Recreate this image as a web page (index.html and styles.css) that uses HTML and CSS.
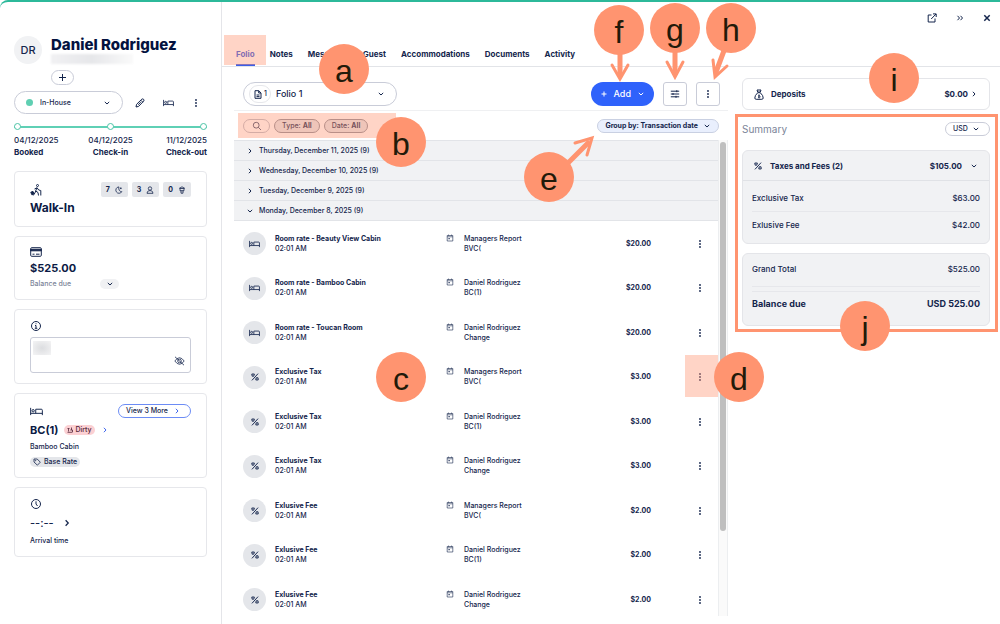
FILE: index.html
```html
<!DOCTYPE html>
<html lang="en">
<head>
  <meta charset="utf-8">
  <title>Daniel Rodriguez - Folio</title>
  <link rel="stylesheet" href="styles.css">
</head>
<body>
  <svg class="sprite" aria-hidden="true">
    <symbol id="down" viewBox="0 0 8 8"><path d="M1.800 2.900 4 5 6.200 2.900"/></symbol>
    <symbol id="right" viewBox="0 0 8 8"><path d="M2.900 1.800 5 4 2.900 6.200"/></symbol>
    <symbol id="dots" viewBox="0 0 4 12"><g fill="currentColor" stroke="none"><circle cx="2" cy="3" r=".9"/><circle cx="2" cy="6" r=".9"/><circle cx="2" cy="9" r=".9"/></g></symbol>
    <symbol id="bed" viewBox="0 0 12 8"><path stroke-width=".9" d="M.6.6v6.800M.6 5.700h10.800M11.400 7.400V2.900q0-1-1-1H5.300v3.800"/><circle stroke-width=".9" cx="2.900" cy="3.300" r="1.100"/></symbol>
    <symbol id="percent" viewBox="0 0 10 10"><path stroke-width="1.200" d="M8.800.8 1.200 9.200M1 1.300h3.200L3.400 4H1.500zM6.500 6h2.300L9 8.700H6z"/></symbol>
    <symbol id="calendar" viewBox="0 0 8 8"><path stroke-width=".6" d="M1.200 1.500h5.600v5.500H1.200zM1.200 2.800h5.600M2.500.6v1M5.500.6v1"/><path d="M2.500 4h1.200v1.200H2.500z" fill="currentColor" stroke="none"/></symbol>
  </svg>

  <div class="page">
    <aside class="sidebar">
      <header class="guest">
        <div class="avatar">DR</div>
        <div class="guest-info">
          <h1>Daniel Rodriguez</h1>
          <div class="redacted"></div>
          <button class="add-tag" aria-label="Add tag"><svg width="9" height="9" viewBox="0 0 9 9"><path d="M4.500 1v7M1 4.500h7"/></svg></button>
        </div>
      </header>

      <div class="status-row">
        <label class="status">
          <span class="status-dot"></span>
          <select aria-label="Status"><option>In-House</option></select>
          <svg width="8" height="8"><use href="#down"/></svg>
        </label>
        <button class="icon-btn" aria-label="Edit"><svg width="10" height="10" viewBox="0 0 10 10"><path d="M1 9l.6-2.700L6.800 1.200q1-.7 1.800.1t.1 1.800L3.600 8.400zM5.800 2.200l2 2M3.200 6.700l2.600-2.600"/></svg></button>
        <button class="icon-btn" aria-label="Room"><svg width="11" height="8"><use href="#bed"/></svg></button>
        <button class="icon-btn" aria-label="More"><svg width="4" height="12"><use href="#dots"/></svg></button>
      </div>

      <div class="timeline">
        <div class="track"><i></i><i></i><i></i></div>
        <ol class="dates">
          <li>04/12/2025<b>Booked</b></li>
          <li>04/12/2025<b>Check-in</b></li>
          <li>11/12/2025<b>Check-out</b></li>
        </ol>
      </div>

      <section class="card walkin">
        <div class="card-top">
          <svg width="12" height="12" viewBox="0 0 12 12"><circle cx="7.500" cy="1.500" r="1"/><path d="M7 3.500 5.700 7l2.300 1.500.5 3M5.700 7l-.8 2-1.700 2.500M6.800 3.800 4.500 5M7.200 4l1.500 2 2 .5M10.800 6.500v5"/><path d="M.8 8.200 3 7.400l1 2.400-2.200.9z" fill="currentColor"/></svg>
          <div class="chips">
            <span class="chip">7 <svg width="8" height="8" viewBox="0 0 8 8"><path d="M3.800.9a3.200 3.200 0 1 0 3 4.800Q3.300 5.500 3.800.9zM5.800 1.500v1.600M5 2.300h1.600"/></svg></span>
            <span class="chip">3 <svg width="8" height="8" viewBox="0 0 8 8"><circle cx="4" cy="2.500" r="1.700"/><path d="M1 7.300Q1.200 5 3 4.700h2Q6.800 5 7 7.300z"/></svg></span>
            <span class="chip">0 <svg width="8" height="8" viewBox="0 0 8 8"><path d="M2 2.500h4v2.200H2zM1 2.500 4 .8l3 1.700M3 4.700v2.500h2V4.700"/></svg></span>
          </div>
        </div>
        <h2>Walk-In</h2>
      </section>

      <section class="card balance">
        <svg width="12" height="10" viewBox="0 0 12 10"><rect x=".7" y=".7" width="10.600" height="8.600" rx="1"/><path d="M.7 2.300h10.600v1.500H.7z" fill="currentColor"/><path d="M2.500 7.200h2M6 7.200h3.500"/></svg>
        <h2>$525.00</h2>
        <div class="balance-due"><span>Balance due</span><button class="toggle" aria-label="Show details"><svg width="8" height="8"><use href="#down"/></svg></button></div>
      </section>

      <section class="card info">
        <svg width="12" height="12" viewBox="0 0 12 12"><circle cx="6" cy="6" r="4.500"/><path d="M5 5.500h1v2.700M4.800 8.300h2.500M6 3.300v.9"/></svg>
        <div class="note">
          <textarea aria-label="Guest note"></textarea>
          <span class="note-blur"></span>
          <svg class="eye" width="11" height="10" viewBox="0 0 11 10"><path d="M.8 5Q5.500-1.500 10.200 5 5.500 11.500.8 5z"/><circle cx="5.500" cy="5" r="1.800"/><path d="M1 .8l9 8.400"/></svg>
        </div>
      </section>

      <section class="card room">
        <div class="card-top">
          <svg width="13" height="9" viewBox="0 0 12 8"><use href="#bed"/></svg>
          <button class="view-more">View 3 More <svg width="8" height="8"><use href="#right"/></svg></button>
        </div>
        <div class="room-name">
          <h2>BC(1)</h2>
          <span class="dirty"><svg width="6" height="6" viewBox="0 0 6 6"><path d="M.5 1.500h2M1.500 1.500v3M.5 5.300h5M4.500.5v2.500M3.300 3h2.200v2"/></svg> Dirty</span>
          <a href="#room" aria-label="Open room"><svg width="8" height="8"><use href="#right"/></svg></a>
        </div>
        <p>Bamboo Cabin</p>
        <span class="rate"><svg width="8" height="8" viewBox="0 0 8 8"><path d="M1 1h3.200L7.300 4.200 4.400 7.200 1 4z"/><circle cx="2.600" cy="2.600" r=".3"/></svg> Base Rate</span>
      </section>

      <section class="card arrival">
        <svg width="12" height="12" viewBox="0 0 12 12"><circle cx="6" cy="6" r="4.500"/><path d="M6 3.300V6l1.500 2"/></svg>
        <div class="time">--:-- <svg width="10" height="10" viewBox="0 0 8 8"><use href="#right"/></svg></div>
        <p>Arrival time</p>
      </section>
    </aside>

    <main class="main">
      <header class="topbar">
        <div class="window-actions">
          <button class="icon-btn" aria-label="Open in new tab"><svg width="10" height="10" viewBox="0 0 10 10"><path d="M4.500 2H1.200v7H8V5.500M6 .9h3.200V4M9 1 4.200 6"/></svg></button>
          <button class="icon-btn" aria-label="Collapse"><svg width="8" height="8" viewBox="0 0 8 8"><path d="M1.500 1.800 3.500 4 1.500 6.200M4.500 1.800 6.500 4 4.500 6.200"/></svg></button>
          <button class="icon-btn close" aria-label="Close"><svg width="8" height="8" viewBox="0 0 8 8"><path d="M1.300 1.300l5.400 5.400M6.700 1.300 1.300 6.700"/></svg></button>
        </div>
        <nav class="tabs">
          <a href="#folio" class="active">Folio</a>
          <a href="#notes">Notes</a>
          <a href="#messages">Messages</a>
          <a href="#guest">Guest</a>
          <a href="#accommodations">Accommodations</a>
          <a href="#documents">Documents</a>
          <a href="#activity">Activity</a>
        </nav>
      </header>

      <div class="content">
        <section class="folio">
          <div class="folio-bar">
            <label class="folio-select">
              <span class="count"><svg width="8" height="9" viewBox="0 0 8 9"><path d="M1 .7h3.800L7 3v5.300H1zM4.700.8V3H7M2.500 5h3M2.500 6.600h3"/></svg>1</span>
              <select aria-label="Folio"><option>Folio 1</option></select>
              <svg width="8" height="8"><use href="#down"/></svg>
            </label>
            <button class="add"><svg width="8" height="8" viewBox="0 0 8 8"><path d="M4 1.500v5M1.500 4h5"/></svg>Add<svg width="8" height="8"><use href="#down"/></svg></button>
            <button class="square" aria-label="Settings"><svg width="10" height="10" viewBox="0 0 10 10"><path d="M.8 2.200h8.400M.8 5h8.400M.8 7.800h8.400M6.800 1.200v2M3 4v2M6 6.800v2"/></svg></button>
            <button class="square" aria-label="More options"><svg width="4" height="12"><use href="#dots"/></svg></button>
          </div>

          <div class="filters">
            <button class="pill search" aria-label="Search"><svg width="10" height="10" viewBox="0 0 10 10"><circle cx="4.200" cy="4.200" r="2.900"/><path d="M6.300 6.300 9 9"/></svg></button>
            <button class="pill filter">Type: <b>All</b></button>
            <button class="pill filter">Date: <b>All</b></button>
            <button class="pill group-by">Group by: Transaction date <svg width="8" height="8"><use href="#down"/></svg></button>
          </div>

          <div class="list">
            <div class="list-view">
              <table>
                <colgroup><col class="col-kind"><col class="col-title"><col><col class="col-amount"><col class="col-more"></colgroup>
                <tbody class="groups">
                  <tr><th colspan="5"><svg width="8" height="8"><use href="#right"/></svg>Thursday, December 11, 2025 (9)</th></tr>
                  <tr><th colspan="5"><svg width="8" height="8"><use href="#right"/></svg>Wednesday, December 10, 2025 (9)</th></tr>
                  <tr><th colspan="5"><svg width="8" height="8"><use href="#right"/></svg>Tuesday, December 9, 2025 (9)</th></tr>
                  <tr><th colspan="5"><svg width="8" height="8"><use href="#down"/></svg>Monday, December 8, 2025 (9)</th></tr>
                </tbody>
                <tbody class="entries" id="entries"></tbody>
              </table>
            </div>
            <div class="scrollbar"><div class="thumb"></div></div>
          </div>
        </section>

        <section class="summary">
          <a class="box deposits" href="#deposits">
            <svg width="10" height="11" viewBox="0 0 10 11"><path d="M3 1h4L6.300 3H3.700zM3.500 3.700h3M3.500 4Q.7 6.500.8 9q.1 1.300 1.400 1.300h5.600Q9.100 10.300 9.200 9q.1-2.500-2.700-5"/><path stroke-width=".7" d="M5 5.300v4M6 6.500Q4 6 4.200 7t1.600.7-.3 1L4 8.500"/></svg>
            <span>Deposits</span><b>$0.00</b><svg width="8" height="8"><use href="#right"/></svg>
          </a>
          <div class="summary-head">
            <h3>Summary</h3>
            <label class="currency"><select aria-label="Currency"><option>USD</option></select><svg width="8" height="8"><use href="#down"/></svg></label>
          </div>
          <div class="box taxes">
            <button class="taxes-head"><svg width="8" height="8"><use href="#percent"/></svg><span>Taxes and Fees (2)</span><b>$105.00</b><svg width="8" height="8"><use href="#down"/></svg></button>
            <dl>
              <div><dt>Exclusive Tax</dt><dd>$63.00</dd></div>
              <div><dt>Exlusive Fee</dt><dd>$42.00</dd></div>
            </dl>
          </div>
          <div class="box totals">
            <dl>
              <div class="grand"><dt>Grand Total</dt><dd>$525.00</dd></div>
              <div class="due"><dt>Balance due</dt><dd>USD 525.00</dd></div>
            </dl>
          </div>
        </section>
      </div>
    </main>
  </div>

  <!-- callouts -->
  <div class="mark mark-tab"></div>
  <div class="mark mark-filters"></div>
  <div class="mark mark-action"></div>
  <div class="frame"></div>
  <svg class="arrows" width="1000" height="624" viewBox="0 0 1000 624">
    <path class="shaft" d="M620 50v24M675 50v22M725 48l-9 24M567 164l21-21"/>
    <path class="head" d="M612 65l8 14 8-14M667 62l8 15 8-15M713 60l2 17 12-11M575 143l17-5-5 17"/>
  </svg>
  <div class="callout a">a</div>
  <div class="callout b">b</div>
  <div class="callout c">c</div>
  <div class="callout d">d</div>
  <div class="callout e">e</div>
  <div class="callout f">f</div>
  <div class="callout g">g</div>
  <div class="callout h">h</div>
  <div class="callout i">i</div>
  <div class="callout j">j</div>

  <script src="script.js"></script>
</body>
</html>
```

FILE: script.js
```js
const entries = [
  ["bed", "Room rate - Beauty View Cabin", "Managers Report", "BVC(", "$20.00"],
  ["bed", "Room rate - Bamboo Cabin", "Daniel Rodriguez", "BC(1)", "$20.00"],
  ["bed", "Room rate - Toucan Room", "Daniel Rodriguez", "Change", "$20.00"],
  ["percent", "Exclusive Tax", "Managers Report", "BVC(", "$3.00"],
  ["percent", "Exclusive Tax", "Daniel Rodriguez", "BC(1)", "$3.00"],
  ["percent", "Exclusive Tax", "Daniel Rodriguez", "Change", "$3.00"],
  ["percent", "Exlusive Fee", "Managers Report", "BVC(", "$2.00"],
  ["percent", "Exlusive Fee", "Daniel Rodriguez", "BC(1)", "$2.00"],
  ["percent", "Exlusive Fee", "Daniel Rodriguez", "Change", "$2.00"]
];

document.getElementById("entries").innerHTML = entries.map(([icon, title, guest, room, amount]) => `
  <tr>
    <td><span class="badge"><svg width="${icon === "bed" ? 11 : 8}" height="8"><use href="#${icon}"/></svg></span></td>
    <td><b>${title}</b><br>02:01 AM</td>
    <td class="who"><div><svg width="8" height="8"><use href="#calendar"/></svg><span>${guest}<br>${room}</span></div></td>
    <td class="amount">${amount}</td>
    <td class="more"><button class="icon-btn" aria-label="Actions"><svg width="4" height="12"><use href="#dots"/></svg></button></td>
  </tr>`).join("");
```

FILE: styles.css
```css
* {
  box-sizing: border-box;
}

body {
  margin: 0;
  background: #fff;
  color: #14254c;
  font: 500 7px/10px "Inter", sans-serif;
}

h1, h2, h3, p, ol, dl, dd {
  margin: 0;
  padding: 0;
}

b {
  font-weight: 700;
}

button, select, textarea {
  margin: 0;
  padding: 0;
  border: 0;
  background: none;
  color: inherit;
  font: inherit;
}

select {
  appearance: none;
  flex: 1;
  min-width: 0;
}

a {
  color: inherit;
  text-decoration: none;
}

svg {
  flex: none;
  fill: none;
  stroke: currentColor;
}

.sprite {
  position: absolute;
  width: 0;
  height: 0;
}

.page {
  display: grid;
  grid-template-columns: 222px 1fr;
  height: 100vh;
  border-top: 2px solid #2cb99a;
  border-top-left-radius: 8px;
}

.icon-btn {
  display: flex;
  align-items: center;
  justify-content: center;
}

/* sidebar */

.sidebar {
  display: flex;
  flex-direction: column;
  gap: 9px;
  padding: 34px 14px 0 14px;
  border-right: 1px solid #e4e5e9;
}

.guest {
  display: flex;
  gap: 9px;
  margin-bottom: -3px;
}

.avatar {
  width: 28px;
  height: 28px;
  border-radius: 50%;
  background: #f1f2f4;
  font-size: 11px;
  line-height: 28px;
  text-align: center;
}

h1 {
  color: #04123f;
  font-size: 15px;
  font-weight: 800;
  line-height: 18px;
}

.redacted {
  width: 82px;
  height: 10px;
  background: linear-gradient(90deg, #f1f1f3, #e6e7ea 50%, #fafafa);
  filter: blur(1px);
}

.add-tag {
  display: flex;
  align-items: center;
  justify-content: center;
  width: 23px;
  height: 15px;
  margin-top: 6px;
  border: 1px solid #c9ccd8;
  border-radius: 8px;
}

.status-row {
  display: flex;
  align-items: center;
  gap: 6px;
}

.status-row .icon-btn {
  width: 22px;
}

.status {
  display: flex;
  align-items: center;
  flex: 1;
  gap: 7px;
  height: 23px;
  padding: 0 11px;
  border: 1px solid #c9ccd8;
  border-radius: 12px;
}

.status-dot {
  width: 7px;
  height: 7px;
  border-radius: 50%;
  background: #5fcfb2;
}

.timeline {
  margin-bottom: 4px;
}

.track {
  display: flex;
  justify-content: space-between;
  background: linear-gradient(#5fd0b5, #5fd0b5) center / 100% 2px no-repeat;
}

.track i {
  width: 7px;
  height: 7px;
  border: 1px solid #4cc4a6;
  border-radius: 50%;
  background: #fff;
}

.dates {
  display: grid;
  grid-template-columns: 1fr 1fr 1fr;
  margin-top: 4px;
  list-style: none;
  font-size: 8px;
  line-height: 12px;
  text-align: center;
}

.dates li:first-child {
  text-align: left;
}

.dates li:last-child {
  text-align: right;
}

.dates b {
  display: block;
}

.card {
  display: flex;
  flex-direction: column;
  align-items: flex-start;
  padding: 10px 15px;
  border: 1px solid #e6e7eb;
  border-radius: 4px;
}

.card h2 {
  color: #0b1a44;
  font-size: 11px;
  line-height: 14px;
}

.card-top {
  display: flex;
  align-items: center;
  justify-content: space-between;
  width: 100%;
}

.chips {
  display: flex;
  gap: 4px;
}

.chip {
  display: flex;
  align-items: center;
  gap: 5px;
  height: 15px;
  padding: 0 5px;
  border-radius: 2px;
  background: #e4e6ea;
  font-weight: 700;
}

.chip svg {
  stroke-width: .8px;
}

.walkin {
  height: 56px;
}

.walkin h2 {
  margin-top: 4px;
  font-size: 12px;
}

.balance {
  height: 64px;
  gap: 4px;
}

.balance-due {
  display: flex;
  align-items: center;
  gap: 29px;
  color: #7b8498;
}

.toggle {
  display: flex;
  align-items: center;
  justify-content: center;
  width: 19px;
  height: 10px;
  border-radius: 5px;
  background: #f0f1f3;
  color: #14254c;
}

.info {
  gap: 5px;
}

.note {
  position: relative;
  width: 100%;
}

.note textarea {
  display: block;
  width: 100%;
  height: 36px;
  border: 1px solid #c9ccd8;
  border-radius: 3px;
  resize: none;
}

.note-blur {
  position: absolute;
  left: 3px;
  top: 4px;
  width: 18px;
  height: 14px;
  background: radial-gradient(#dcdde0, #f4f4f5);
}

.eye {
  position: absolute;
  right: 6px;
  bottom: 7px;
  stroke-width: .8px;
}

.room {
  height: 85px;
}

.view-more {
  display: flex;
  align-items: center;
  justify-content: space-between;
  width: 73px;
  height: 14px;
  padding: 0 9px 0 7px;
  border: 1px solid #6c8cf5;
  border-radius: 7px;
}

.view-more svg,
.room-name a {
  color: #3f66ee;
}

.room-name {
  display: flex;
  align-items: center;
  gap: 6px;
  margin: 5px 0;
}

.room-name a {
  display: flex;
}

.dirty,
.rate {
  display: flex;
  align-items: center;
  gap: 2px;
  height: 10px;
  padding: 0 3px;
  border-radius: 5px;
  background: #fbd0d3;
  color: #54263a;
}

.dirty svg,
.rate svg {
  stroke-width: .8px;
}

.rate {
  gap: 3px;
  margin-top: 5px;
  background: #e4e6ea;
  color: #14254c;
}

.arrival {
  height: 70px;
  gap: 8px;
}

.time {
  display: flex;
  align-items: center;
  gap: 8px;
  font-size: 11px;
}

/* top bar */

.main {
  display: flex;
  flex-direction: column;
  min-width: 0;
  min-height: 0;
}

.topbar {
  display: flex;
  flex-direction: column;
  justify-content: space-between;
  height: 65px;
  padding-top: 11px;
  border-bottom: 1px solid #e2e4e8;
}

.window-actions {
  display: flex;
  justify-content: flex-end;
  gap: 19px;
  padding-right: 9px;
}

.close {
  stroke-width: 1.5px;
}

.tabs {
  display: flex;
  gap: 15px;
  padding-left: 14px;
  font-size: 8px;
  font-weight: 700;
  line-height: 24px;
}

.tabs .active {
  box-shadow: inset 0 -2px #3a5fe8;
  color: #2f55e0;
}

/* folio */

.content {
  display: grid;
  grid-template-columns: 1fr 272px;
  flex: 1;
  min-height: 0;
}

.folio {
  display: flex;
  flex-direction: column;
  min-height: 0;
  padding: 15px 0 8px 12px;
}

.folio-bar {
  display: flex;
  gap: 9px;
  padding: 0 8px 4px 9px;
  border-bottom: 1px solid #eff0f2;
}

.folio-select {
  display: flex;
  align-items: center;
  gap: 5px;
  width: 154px;
  height: 24px;
  margin-right: auto;
  padding: 0 11px 0 5px;
  border: 1px solid #c9ccd8;
  border-radius: 12px;
  font-size: 9px;
}

.count {
  display: flex;
  align-items: center;
  gap: 2px;
  height: 18px;
  padding: 0 3px 0 4px;
  border: 1px solid #e6e7eb;
  border-radius: 9px;
  color: #14254c;
  font-size: 7px;
}

.add {
  display: flex;
  align-items: center;
  gap: 6px;
  height: 24px;
  padding: 0 9px;
  border-radius: 12px;
  background: #2f62fb;
  color: #fff;
  font-size: 9px;
}

.square {
  display: flex;
  align-items: center;
  justify-content: center;
  width: 24px;
  height: 24px;
  border: 1px solid #c9ccd8;
  border-radius: 3px;
}

.filters {
  display: flex;
  align-items: center;
  gap: 4px;
  height: 29px;
  padding: 0 9px;
}

.pill {
  display: flex;
  align-items: center;
  justify-content: center;
  gap: 2px;
  height: 14px;
  padding: 0 7px;
  border: 1px solid #b8bcc8;
  border-radius: 7px;
}

.search {
  width: 27px;
}

.search svg {
  stroke-width: .8px;
}

.filter {
  border-color: #8a8d98;
  background: #e4e6ea;
}

.group-by {
  gap: 5px;
  margin-left: auto;
  border-color: #c9d0e2;
  background: #e9effd;
  font-weight: 700;
}

.list {
  display: flex;
  flex: 1;
  min-height: 0;
  border-right: 1px solid #eceef0;
}

.list-view {
  flex: 1;
  overflow: hidden;
}

.scrollbar {
  width: 9px;
  padding: 2px 1px;
  border-left: 1px solid #eceef0;
  background: #fafafa;
}

.thumb {
  width: 6px;
  height: 389px;
  border-radius: 3px;
  background: #bfbfbf;
}

table {
  width: 100%;
  border-spacing: 0;
  table-layout: fixed;
}

.col-kind {
  width: 41px;
}

.col-title {
  width: 171px;
}

.col-amount {
  width: 60px;
}

.col-more {
  width: 67px;
}

th {
  height: 20px;
  padding: 0 12px;
  border-top: 1px solid #e2e4e8;
  background: #f1f2f4;
  font-weight: 500;
  text-align: left;
}

.groups tr:last-child th {
  height: 21px;
  border-bottom: 1px solid #e2e4e8;
}

th svg {
  margin-right: 5px;
  vertical-align: middle;
}

td {
  height: 44px;
  padding: 0;
}

.entries tr:nth-child(odd) td {
  height: 45px;
}

.badge {
  display: flex;
  align-items: center;
  justify-content: center;
  width: 23px;
  height: 23px;
  margin-left: 9px;
  border-radius: 50%;
  background: #e4e6ea;
}

.who div {
  display: flex;
  gap: 10px;
}

.amount {
  font-weight: 700;
  text-align: right;
}

.more .icon-btn {
  width: 36px;
  margin-left: auto;
}

/* summary */

.summary {
  padding: 11px 10px 0 14px;
  font-size: 8px;
}

.box {
  border: 1px solid #e4e5e9;
  border-radius: 6px;
  background: #f1f2f4;
}

.deposits,
.taxes-head {
  display: flex;
  align-items: center;
  gap: 8px;
  width: 100%;
  height: 32px;
  padding: 0 11px;
  font-weight: 700;
}

.deposits {
  gap: 2px;
  background: #fff;
}

.deposits svg:first-child {
  margin-right: 5px;
}

.box span {
  margin-right: auto;
}

.summary-head {
  display: flex;
  align-items: center;
  justify-content: space-between;
  margin: 12px 0 14px;
}

h3 {
  color: #7b8498;
  font-size: 10px;
  font-weight: 400;
}

.currency {
  display: flex;
  align-items: center;
  width: 45px;
  height: 14px;
  padding: 0 9px 0 7px;
  border: 1px solid #c9ccd8;
  border-radius: 7px;
  font-size: 7px;
}

.taxes-head {
  height: 30px;
  border-bottom: 1px solid #e0e2e6;
}

.box dl {
  padding: 4px 9px;
}

.box dl div {
  display: flex;
  align-items: center;
  justify-content: space-between;
  height: 27px;
}

.box dl div + div {
  border-top: 1px solid #e6e7eb;
}

.taxes dl {
  padding: 3px 9px 5px;
}

.totals {
  margin-top: 9px;
}

.totals dl {
  padding: 0 9px 10px;
}

.totals .grand {
  height: 33px;
  margin-bottom: 4px;
  padding-bottom: 3px;
  border-bottom: 1px solid #e6e7eb;
}

.totals .due {
  height: 24px;
  font-size: 9px;
  font-weight: 700;
}

/* callouts */

.mark,
.frame,
.arrows,
.callout {
  position: absolute;
  pointer-events: none;
}

.mark {
  background: #ff947066;
}

.mark-tab {
  left: 224px;
  top: 35px;
  width: 42px;
  height: 30px;
}

.mark-filters {
  left: 238px;
  top: 113px;
  width: 158px;
  height: 25px;
}

.mark-action {
  left: 685px;
  top: 355px;
  width: 33px;
  height: 42px;
}

.frame {
  left: 735px;
  top: 114px;
  width: 263px;
  height: 218px;
  border: 3px solid #ff9470;
}

.arrows {
  left: 0;
  top: 0;
  stroke: #ff9470;
  stroke-linecap: round;
}

.shaft {
  stroke-width: 5;
}

.head {
  stroke-width: 3;
}

.callout {
  width: 50px;
  height: 50px;
  border-radius: 50%;
  background: #ff9470;
  color: #221a0a;
  font: 32px/54px "Liberation Sans", sans-serif;
  text-align: center;
}

.a { left: 319px; top: 44px; }
.b { left: 376px; top: 117px; }
.c { left: 376px; top: 352px; }
.d { left: 714px; top: 352px; }
.e { left: 524px; top: 152px; }
.f { left: 594px; top: 5px; }
.g { left: 650px; top: 3px; }
.h { left: 706px; top: 3px; }
.i { left: 869px; top: 53px; }
.j { left: 840px; top: 301px; }
```
